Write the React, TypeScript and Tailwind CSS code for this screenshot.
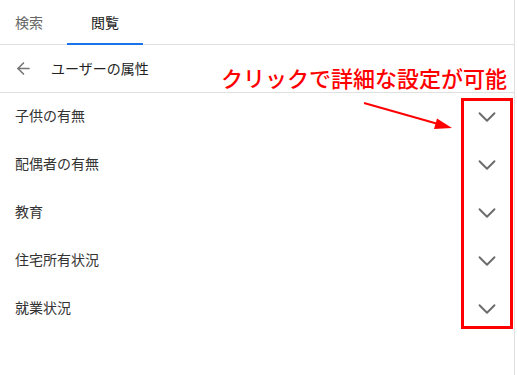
import { ChevronDown, ArrowLeft } from "lucide-react";

const items = ["子供の有無", "配偶者の有無", "教育", "住宅所有状況", "就業状況"];

export default function App() {
  return (
    <div
      className="relative w-[517px] h-[375px] bg-white overflow-hidden"
      style={{ fontFamily: '"Noto Sans CJK JP", "Noto Sans", sans-serif' }}
    >
      <div className="w-[515px] h-full border-r border-[#e0e0e0]">
        {/* tabs */}
        <div className="flex h-[45px] border-b border-[#e0e0e0] text-[14px]">
          <div className="w-[67px] flex items-center pl-[15px] text-[#666]">検索</div>
          <div className="relative w-[76px] flex items-center justify-center text-[#222]">
            閲覧
            <span className="absolute left-0 right-0 bottom-[-1px] h-[2px] bg-[#1a73e8]" />
          </div>
        </div>

        {/* header */}
        <div className="flex items-center h-[48px] border-b border-[#e0e0e0] px-[14px] text-[14px] text-[#222]">
          <ArrowLeft className="w-[19px] h-[19px] text-[#757575]" strokeWidth={2} />
          <span className="ml-[18px]">ユーザーの属性</span>
        </div>

        {/* list */}
        <div>
          {items.map((label) => (
            <div key={label} className="flex items-center justify-between h-[48px] pl-[15px] pr-[12px] text-[14px] text-[#333]">
              <span className="pb-[3px]">{label}</span>
              <ChevronDown className="w-[30px] h-[30px] text-[#6b6b6b]" strokeWidth={1.5} />
            </div>
          ))}
        </div>
      </div>

      {/* annotation */}
      <div className="absolute left-[221px] top-[62px] text-[22px] leading-[30px] font-medium text-[#ff0000] whitespace-nowrap">
        クリックで詳細な設定が可能
      </div>
      <div className="absolute left-[461px] top-[98px] w-[52px] h-[231px] border-[3px] border-[#ff0000]" />
      <svg className="absolute left-0 top-0" width="517" height="375">
        <line x1="364" y1="103" x2="440" y2="124.5" stroke="#ff0000" strokeWidth="2" />
        <polygon points="452,128 437,118.5 434,129" fill="#ff0000" />
      </svg>
    </div>
  );
}
